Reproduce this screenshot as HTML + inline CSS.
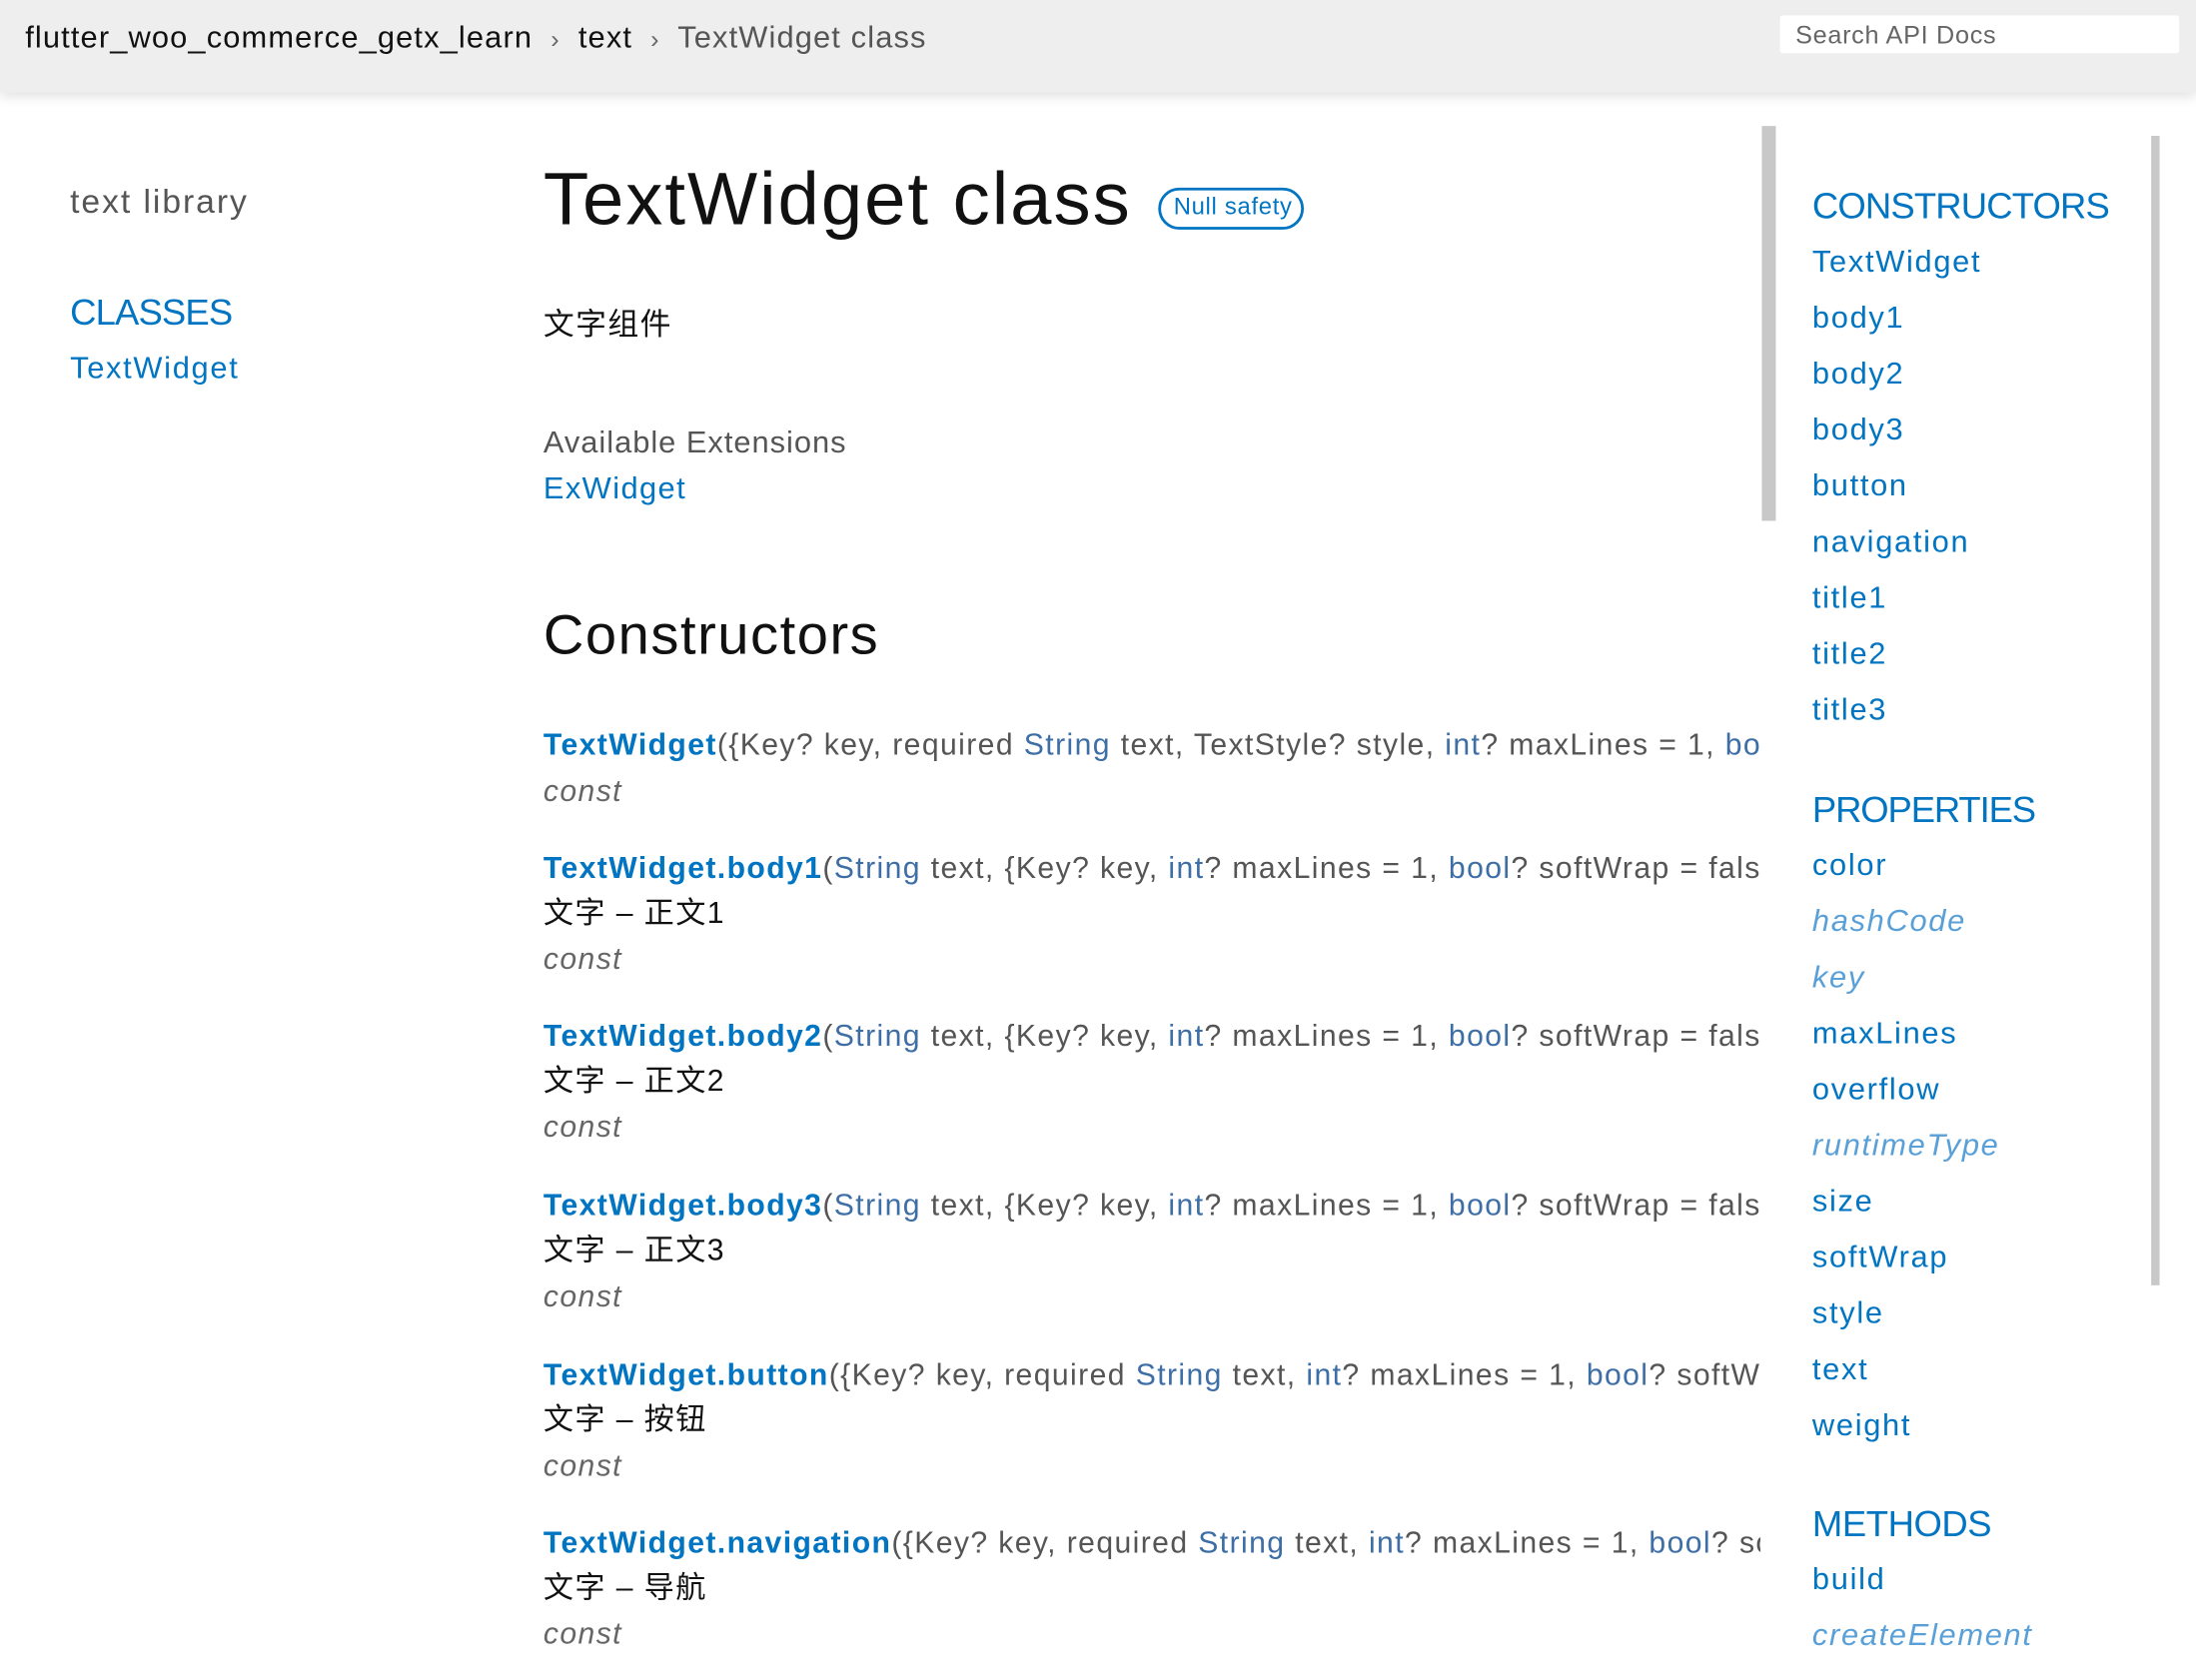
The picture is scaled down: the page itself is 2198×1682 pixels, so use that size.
<!DOCTYPE html>
<html><head><meta charset="utf-8"><style>
html,body{margin:0;padding:0;background:#fff;overflow:hidden;width:2198px;height:1670px}
#w{position:absolute;left:0;top:0;width:1568px;height:1191px;transform:scale(1.40178);transform-origin:0 0;font-family:"Liberation Sans","Noto Sans CJK SC",sans-serif;color:#111}
.a{position:absolute;white-space:nowrap;line-height:32px}
.b{color:#0175c2}
.t{color:#3d6ea5}
.g{color:#555}
.i{font-style:italic;color:#5aa0d8}
.c{font-style:italic;color:#666}
#hdr{position:absolute;left:0;top:0;width:1568px;height:66px;background:#eee;box-shadow:0 3px 8px rgba(0,0,0,.12)}
#main{position:absolute;left:388px;top:500px;width:869px;height:700px;overflow:hidden}
#main .a{font-size:21.5px;letter-spacing:1px}
.r{font-size:22px;letter-spacing:1.2px}
.u{letter-spacing:-0.6px}
</style></head><body><div id="w">
<div id="hdr">
<div class="a" style="left:18px;top:11px;font-size:22px;color:#111;letter-spacing:0.8px">flutter_woo_commerce_getx_learn <span style="color:#666;font-size:18px;margin:0 6px">›</span> text <span style="color:#666;font-size:18px;margin:0 6px">›</span> <span style="color:#555">TextWidget class</span></div>
<div style="position:absolute;left:1271px;top:11px;width:285px;height:27px;background:#fff;border-radius:2px"></div>
<div class="a" style="left:1282px;top:9px;font-size:18px;color:#666;letter-spacing:0.5px">Search API Docs</div>
</div>

<div class="a g" style="left:50px;top:129px;font-size:24px;letter-spacing:1.4px">text library</div>
<div class="a b u" style="left:50px;top:207px;font-size:26px">CLASSES</div>
<div class="a b r" style="left:50px;top:247px">TextWidget</div>

<div class="a" style="left:388px;top:112px;font-size:53px;line-height:62px;letter-spacing:1.4px">TextWidget class</div>
<div style="position:absolute;left:827px;top:134px;width:100px;height:26px;border:2px solid #0175c2;border-radius:15px"></div>
<div class="a b" style="left:838px;top:132px;font-size:17px;letter-spacing:0.5px">Null safety</div>
<div class="a" style="left:388px;top:216px;font-size:22px;letter-spacing:1px">文字组件</div>
<div class="a g" style="left:388px;top:300px;font-size:22px;letter-spacing:0.7px">Available Extensions</div>
<div class="a b" style="left:388px;top:333px;font-size:22px;letter-spacing:1px">ExWidget</div>
<div class="a" style="left:388px;top:430px;font-size:40px;line-height:48px;letter-spacing:1.1px">Constructors</div>

<div id="main">
<div class="a g" style="left:0;top:16px"><b class="b">TextWidget</b>({Key? key, required <span class="t">String</span> text, TextStyle? style, <span class="t">int</span>? maxLines = 1, <span class="t">bool</span>? softWrap</div>
<div class="a c" style="left:0;top:49px">const</div>
<div class="a g" style="left:0;top:104px"><b class="b">TextWidget.body1</b>(<span class="t">String</span> text, {Key? key, <span class="t">int</span>? maxLines = 1, <span class="t">bool</span>? softWrap = false</div>
<div class="a" style="left:0;top:136px">文字 – 正文1</div>
<div class="a c" style="left:0;top:169px">const</div>
<div class="a g" style="left:0;top:224px"><b class="b">TextWidget.body2</b>(<span class="t">String</span> text, {Key? key, <span class="t">int</span>? maxLines = 1, <span class="t">bool</span>? softWrap = false</div>
<div class="a" style="left:0;top:256px">文字 – 正文2</div>
<div class="a c" style="left:0;top:289px">const</div>
<div class="a g" style="left:0;top:345px"><b class="b">TextWidget.body3</b>(<span class="t">String</span> text, {Key? key, <span class="t">int</span>? maxLines = 1, <span class="t">bool</span>? softWrap = false</div>
<div class="a" style="left:0;top:377px">文字 – 正文3</div>
<div class="a c" style="left:0;top:410px">const</div>
<div class="a g" style="left:0;top:466px"><b class="b">TextWidget.button</b>({Key? key, required <span class="t">String</span> text, <span class="t">int</span>? maxLines = 1, <span class="t">bool</span>? softWrap</div>
<div class="a" style="left:0;top:498px">文字 – 按钮</div>
<div class="a c" style="left:0;top:531px">const</div>
<div class="a g" style="left:0;top:586px"><b class="b">TextWidget.navigation</b>({Key? key, required <span class="t">String</span> text, <span class="t">int</span>? maxLines = 1, <span class="t">bool</span>? softWrap</div>
<div class="a" style="left:0;top:618px">文字 – 导航</div>
<div class="a c" style="left:0;top:651px">const</div>
</div>

<div style="position:absolute;left:1258px;top:90px;width:10px;height:282px;background:#c8c8c8"></div>
<div style="position:absolute;left:1536px;top:97px;width:6px;height:821px;background:#c8c8c8"></div>

<div class="a b u" style="left:1294px;top:131px;font-size:26px">CONSTRUCTORS</div>
<div class="a b r" style="left:1294px;top:171px">TextWidget</div>
<div class="a b r" style="left:1294px;top:211px">body1</div>
<div class="a b r" style="left:1294px;top:251px">body2</div>
<div class="a b r" style="left:1294px;top:291px">body3</div>
<div class="a b r" style="left:1294px;top:331px">button</div>
<div class="a b r" style="left:1294px;top:371px">navigation</div>
<div class="a b r" style="left:1294px;top:411px">title1</div>
<div class="a b r" style="left:1294px;top:451px">title2</div>
<div class="a b r" style="left:1294px;top:491px">title3</div>
<div class="a b u" style="left:1294px;top:562px;font-size:26px;letter-spacing:-0.8px">PROPERTIES</div>
<div class="a b r" style="left:1294px;top:602px">color</div>
<div class="a i r" style="left:1294px;top:642px">hashCode</div>
<div class="a i r" style="left:1294px;top:682px">key</div>
<div class="a b r" style="left:1294px;top:722px">maxLines</div>
<div class="a b r" style="left:1294px;top:762px">overflow</div>
<div class="a i r" style="left:1294px;top:802px">runtimeType</div>
<div class="a b r" style="left:1294px;top:842px">size</div>
<div class="a b r" style="left:1294px;top:882px">softWrap</div>
<div class="a b r" style="left:1294px;top:922px">style</div>
<div class="a b r" style="left:1294px;top:962px">text</div>
<div class="a b r" style="left:1294px;top:1002px">weight</div>
<div class="a b u" style="left:1294px;top:1072px;font-size:26px;letter-spacing:-0.3px">METHODS</div>
<div class="a b r" style="left:1294px;top:1112px">build</div>
<div class="a i r" style="left:1294px;top:1152px">createElement</div>
</div></body></html>
